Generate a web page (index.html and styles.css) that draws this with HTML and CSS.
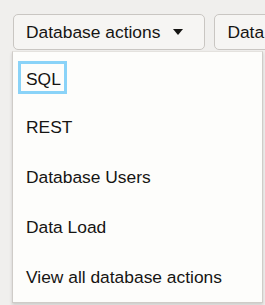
FILE: index.html
```html
<!DOCTYPE html>
<html>
<head>
<meta charset="utf-8">
<link rel="stylesheet" href="styles.css">
</head>
<body>
<div class="page">
  <div class="toolbar">
    <button class="btn">Database actions <span class="caret"></span></button>
    <button class="btn">Data</button>
  </div>
  <ul class="menu">
    <li class="item"><span class="focus">SQL</span></li>
    <li class="item">REST</li>
    <li class="item">Database Users</li>
    <li class="item">Data Load</li>
    <li class="item">View all database actions</li>
  </ul>
</div>
</body>
</html>
```
FILE: styles.css
```css
html, body {
  margin: 0;
  padding: 0;
  height: 100%;
  overflow: hidden;
}
body {
  background: #f0efed;
  font-family: "Liberation Sans", Arial, sans-serif;
  color: #161513;
}
.page {
  position: relative;
  height: 305px;
  overflow: hidden;
}
.toolbar {
  display: flex;
  gap: 9px;
  padding: 14px 0 0 13px;
  white-space: nowrap;
  overflow: hidden;
}
.btn {
  flex: none;
  display: flex;
  align-items: center;
  height: 36px;
  box-sizing: border-box;
  padding: 0 21px 0 12px;
  background: #f6f5f3;
  border: 1px solid #c9c6c2;
  border-radius: 5px;
  font-family: inherit;
  font-size: 17.4px;
  color: #161513;
}
.caret {
  display: inline-block;
  width: 0;
  height: 0;
  margin-left: 13px;
  border-left: 5px solid transparent;
  border-right: 5px solid transparent;
  border-top: 6px solid #161513;
}
.menu {
  position: absolute;
  left: 12px;
  top: 51px;
  width: 251px;
  box-sizing: border-box;
  margin: 0;
  padding: 0;
  list-style: none;
  background: #fdfdfb;
  border: 1px solid #cfccc8;
  border-top-color: #e4e2de;
  box-shadow: 0 2px 3px rgba(0, 0, 0, 0.15);
}
.item {
  height: 50px;
  display: flex;
  align-items: center;
  padding-left: 13px;
  font-size: 17.4px;
  white-space: nowrap;
}
.focus {
  padding: 5px 3px 1px 5px;
  margin-left: -5px;
  outline: 3px solid #8ad3f8;
}
```
